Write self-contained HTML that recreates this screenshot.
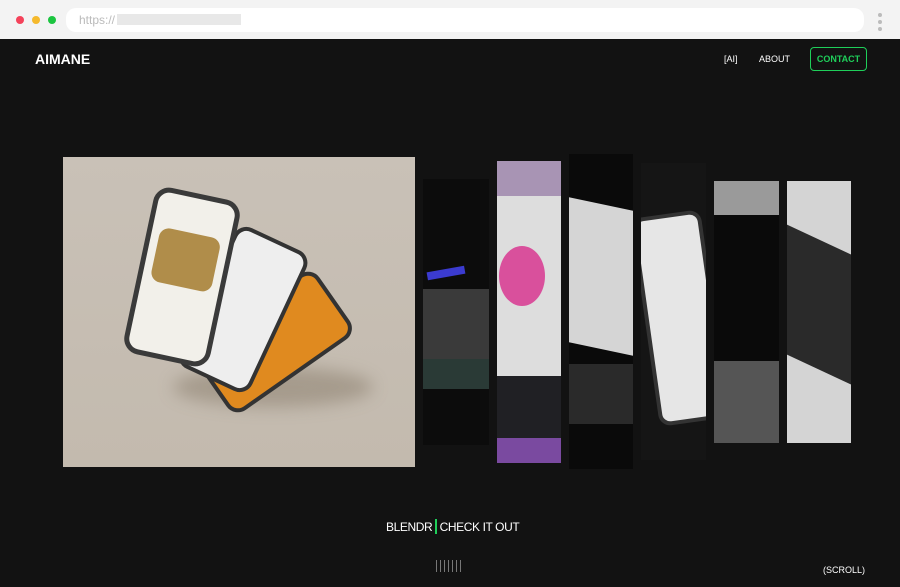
<!DOCTYPE html><html><head><style>
*{margin:0;padding:0;box-sizing:border-box}
body{width:900px;height:587px;overflow:hidden;background:#121212;font-family:"Liberation Sans",sans-serif;position:relative}
.bar{position:absolute;left:0;top:0;width:900px;height:39px;background:#f3f3f3}
.dot{position:absolute;top:16px;width:8px;height:8px;border-radius:50%}
.url{position:absolute;left:66px;top:8px;width:798px;height:24px;background:#fff;border-radius:10px}
.a{position:absolute}
.s{position:absolute;overflow:hidden}
</style></head><body>
<div class="bar">
<div class="dot" style="left:16px;background:#f4425a"></div>
<div class="dot" style="left:32px;background:#f5b92c"></div>
<div class="dot" style="left:48px;background:#1bc540"></div>
<div class="url"><span style="position:absolute;left:13px;top:5px;font-size:12px;color:#bbb">https://</span><div style="position:absolute;left:51px;top:6px;width:124px;height:11px;background:#e8e8e8"></div></div>
<div style="position:absolute;left:878px;top:13px;width:4px;height:4px;border-radius:50%;background:#bbb;box-shadow:0 7px 0 #bbb,0 14px 0 #bbb"></div>
</div>
<div class="a" style="left:35px;top:51px;color:#fff;font-weight:bold;font-size:14px;letter-spacing:0">AIMANE</div>
<div class="a" style="left:724px;top:54px;color:#fff;font-size:9px">[AI]</div>
<div class="a" style="left:759px;top:54px;color:#fff;font-size:9px">ABOUT</div>
<div class="a" style="left:810px;top:47px;width:57px;height:24px;border:1.5px solid #1fcf5a;border-radius:4px;color:#1fcf5a;font-size:9px;font-weight:bold;text-align:center;line-height:22px">CONTACT</div>

<div class="s" style="left:63px;top:157px;width:352px;height:310px;background:linear-gradient(180deg,#c9c1b7,#c3baae)">
<div style="position:absolute;left:110px;top:210px;width:200px;height:40px;border-radius:50%;background:rgba(110,95,75,.35);filter:blur(8px)"></div>
<div style="position:absolute;left:170px;top:110px;width:80px;height:150px;background:#e08a1f;border-radius:14px;transform:rotate(55deg);border:4px solid #333"></div>
<div style="position:absolute;left:140px;top:75px;width:80px;height:155px;background:#eee;border-radius:14px;transform:rotate(25deg);border:4px solid #333"></div>
<div style="position:absolute;left:75px;top:35px;width:88px;height:170px;background:#f2f0ea;border-radius:16px;transform:rotate(12deg);border:5px solid #3a3a3a"><div style="margin:35px 8px;height:55px;border-radius:10px;background:#b08d4a"></div></div>
</div>
<div class="s" style="left:423px;top:179px;width:66px;height:266px;background:#0c0c0c"><div style="position:absolute;top:110px;width:66px;height:70px;background:#3a3a3a"></div><div style="position:absolute;top:90px;left:4px;width:38px;height:8px;background:#3b3bd0;transform:rotate(-10deg)"></div><div style="position:absolute;top:180px;width:66px;height:30px;background:#2a3a36"></div></div>
<div class="s" style="left:497px;top:161px;width:64px;height:302px;background:#ddd"><div style="height:35px;background:#a894b4"></div><div style="position:absolute;top:85px;left:2px;width:46px;height:60px;border-radius:50%;background:#d9509c"></div><div style="position:absolute;top:215px;width:64px;height:87px;background:#202024"></div><div style="position:absolute;bottom:0;width:64px;height:25px;background:#7a4aa0"></div></div>
<div class="s" style="left:569px;top:154px;width:64px;height:315px;background:#0a0a0a"><div style="position:absolute;top:50px;width:64px;height:145px;background:#d5d5d5;transform:skewY(12deg)"></div><div style="position:absolute;top:210px;width:64px;height:60px;background:#2a2a2a"></div></div>
<div class="s" style="left:641px;top:163px;width:65px;height:297px;background:#151515"><div style="position:absolute;top:50px;left:4px;width:70px;height:210px;background:#e6e6e6;border:4px solid #333;border-radius:12px;transform:rotate(-8deg)"></div></div>
<div class="s" style="left:714px;top:181px;width:65px;height:262px;background:#0a0a0a"><div style="height:34px;background:#9a9a9a"></div><div style="position:absolute;top:180px;width:65px;height:82px;background:#555"></div></div>
<div class="s" style="left:787px;top:181px;width:64px;height:262px;background:#d4d4d4"><div style="position:absolute;top:60px;left:-10px;width:90px;height:130px;background:#2a2a2a;transform:skewY(25deg)"></div></div>

<div class="a" style="left:386px;top:519px;color:#fff;font-size:12px;letter-spacing:-0.4px">BLENDR <span style="display:inline-block;width:1.5px;height:15px;background:#1fcf5a;vertical-align:-3px"></span> CHECK IT OUT</div>
<div class="a" style="left:436px;top:560px;width:28px;height:12px;background:repeating-linear-gradient(90deg,#777 0 1px,transparent 1px 4px)"></div>
<div class="a" style="left:823px;top:565px;color:#fff;font-size:9px">(SCROLL)</div>
</body></html>
